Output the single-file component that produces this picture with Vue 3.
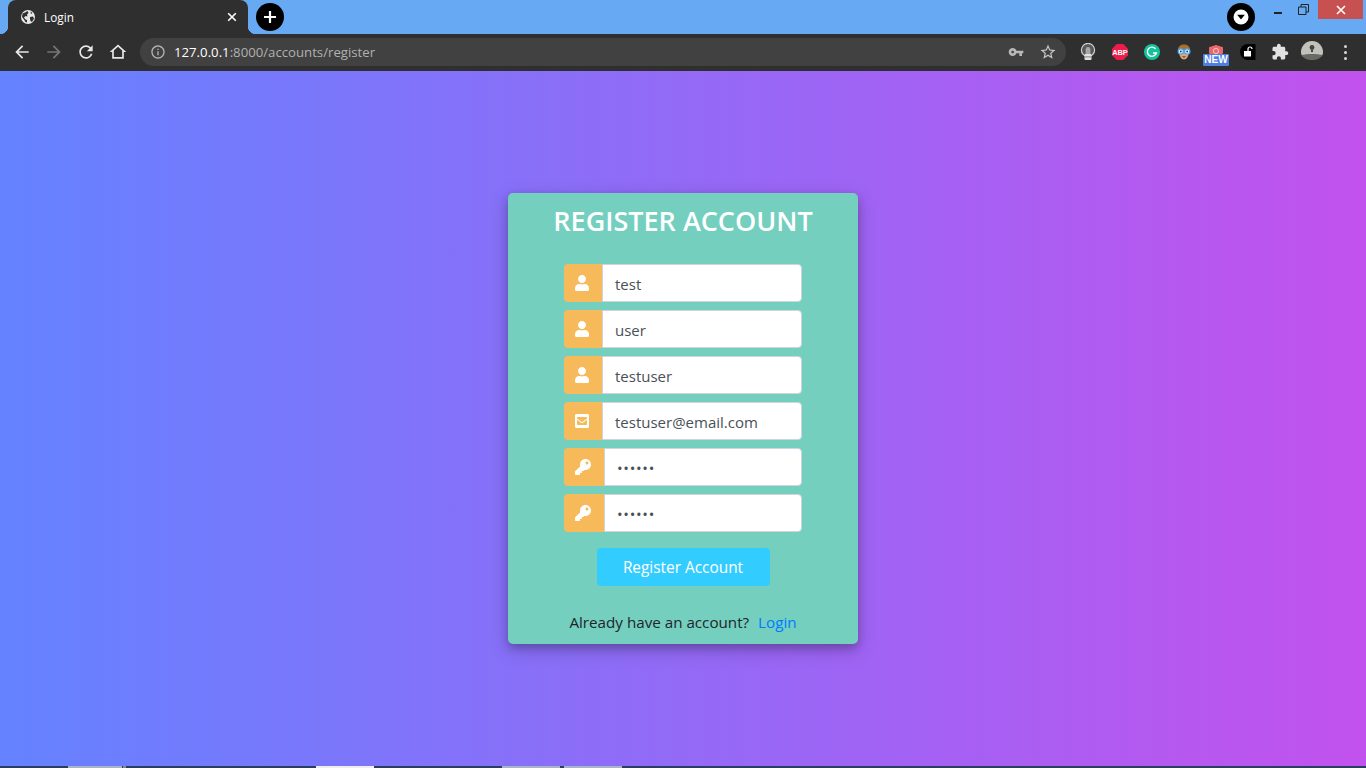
<script setup>
const fields = [
  { icon: 'user', value: 'test', type: 'text' },
  { icon: 'user', value: 'user', type: 'text' },
  { icon: 'user', value: 'testuser', type: 'text' },
  { icon: 'mail', value: 'testuser@email.com', type: 'text' },
  { icon: 'key', value: 'secret', type: 'password' },
  { icon: 'key', value: 'secret', type: 'password' },
]
</script>

<template>
  <div class="screen">
    <header class="tabstrip">
      <div class="tab">
        <svg class="favicon" viewBox="0 0 14 14" width="14" height="14">
          <circle cx="7" cy="7" r="7" fill="#e8e8e8" />
          <path d="M1.5 3.5 L4 2.5 L6.5 1 L7.5 3 L6 4.5 L6.5 6.5 L4.5 6 L3 7.5 L4.5 9.5 L6 10 L6 12.5 L4.5 12 L3 9.5 L1 7 Z" fill="#2f2f2f" />
          <path d="M9 7 L12 6.5 L13 8.5 L11 12 L9.5 11 L9 9 Z M9.5 1.5 L11.5 3 L10 4 Z" fill="#2f2f2f" />
        </svg>
        <span class="tab-title">Login</span>
        <svg class="tab-close" viewBox="0 0 10 10" width="10" height="10">
          <path d="M1.2 1.2 L8.8 8.8 M8.8 1.2 L1.2 8.8" stroke="#fff" stroke-width="1.6" />
        </svg>
      </div>
      <div class="newtab">
        <svg viewBox="0 0 14 14" width="14" height="14">
          <path d="M7 1 V13 M1 7 H13" stroke="#fff" stroke-width="2.2" />
        </svg>
      </div>
      <div class="strip-right">
        <div class="profile-dot">
          <svg viewBox="0 0 16 16" width="16" height="16">
            <circle cx="8" cy="8" r="7.5" fill="#fff" />
            <path d="M4.2 5.8 H11.8 L8 10.6 Z" fill="#000" />
          </svg>
        </div>
        <div class="winctl">
          <svg viewBox="0 0 10 10" width="10" height="10"><rect x="0" y="7" width="8" height="2" fill="#222" /></svg>
        </div>
        <div class="winctl">
          <svg viewBox="0 0 11 11" width="11" height="11">
            <path d="M.5 3 H8 V10.5 H.5 Z M3 3 V.5 H10.5 V8 H8" fill="none" stroke="#222" stroke-width="1" />
          </svg>
        </div>
        <div class="winclose">
          <svg viewBox="0 0 10 10" width="10" height="10">
            <path d="M1 1 L9 9 M9 1 L1 9" stroke="#fff" stroke-width="1.6" />
          </svg>
        </div>
      </div>
    </header>

    <nav class="toolbar">
      <div class="tool"><svg viewBox="0 0 24 24" width="20" height="20"><path fill="#e8e8e8" d="M20 11H7.83l5.59-5.59L12 4l-8 8 8 8 1.41-1.41L7.83 13H20v-2z" /></svg></div>
      <div class="tool"><svg viewBox="0 0 24 24" width="20" height="20"><path fill="#767676" d="M4 11h12.17l-5.59-5.59L12 4l8 8-8 8-1.41-1.41L16.17 13H4v-2z" /></svg></div>
      <div class="tool"><svg viewBox="0 0 24 24" width="20" height="20"><path fill="#e8e8e8" d="M17.65 6.35A7.958 7.958 0 0 0 12 4c-4.42 0-7.99 3.58-7.99 8s3.57 8 7.99 8c3.73 0 6.84-2.55 7.73-6h-2.08A5.99 5.99 0 0 1 12 18c-3.31 0-6-2.69-6-6s2.69-6 6-6c1.66 0 3.14.69 4.22 1.78L13 11h7V4l-2.35 2.35z" /></svg></div>
      <div class="tool"><svg viewBox="0 0 24 24" width="20" height="20"><path fill="#e8e8e8" d="M12 3L2 12h3v8h14v-8h3L12 3zm5 15H7v-7.81l5-4.5 5 4.5V18z" /></svg></div>

      <div class="omnibox">
        <svg class="info" viewBox="0 0 24 24" width="16" height="16"><path fill="#b4b4b4" d="M11 7h2v2h-2zm0 4h2v6h-2zm1-9C6.48 2 2 6.48 2 12s4.48 10 10 10 10-4.48 10-10S17.52 2 12 2zm0 18c-4.41 0-8-3.59-8-8s3.59-8 8-8 8 3.59 8 8-3.59 8-8 8z" /></svg>
        <span class="url"><span class="host">127.0.0.1</span>:8000/accounts/register</span>
        <div class="tool"><svg viewBox="0 0 24 24" width="16" height="16"><path fill="#b8b8b8" d="M12.65 10C11.83 7.67 9.61 6 7 6c-3.31 0-6 2.69-6 6s2.69 6 6 6c2.61 0 4.83-1.67 5.65-4H17v4h4v-4h2v-4H12.65zM7 14c-1.1 0-2-.9-2-2s.9-2 2-2 2 .9 2 2-.9 2-2 2z" /></svg></div>
        <div class="tool"><svg viewBox="0 0 24 24" width="18" height="18"><path fill="#c8c8c8" d="M22 9.24l-7.19-.62L12 2 9.19 8.63 2 9.24l5.46 4.73L5.82 21 12 17.27 18.18 21l-1.63-7.03L22 9.24zM12 15.4l-3.76 2.27 1-4.28-3.32-2.88 4.38-.38L12 6.1l1.71 4.04 4.38.38-3.32 2.88 1 4.28L12 15.4z" /></svg></div>
      </div>

      <div class="tool">
        <svg viewBox="0 0 16 18" width="16" height="18">
          <circle cx="8" cy="7" r="6.6" fill="#5a5a5a" stroke="#d0d0d0" stroke-width="1.2" />
          <path d="M5.6 6.5 a2.4 2.4 0 0 1 4.8 0 V11 H5.6 Z" fill="#a8a8a8" />
          <rect x="4.5" y="11" width="7" height="6" rx="1" fill="#e2e2e2" />
          <rect x="4.5" y="13.4" width="7" height="1" fill="#7c7c7c" />
        </svg>
      </div>
      <div class="tool">
        <svg viewBox="0 0 16 16" width="16" height="16">
          <path d="M4.7 0 H11.3 L16 4.7 V11.3 L11.3 16 H4.7 L0 11.3 V4.7 Z" fill="#ec1c4b" />
          <text x="8" y="11" class="abp">ABP</text>
        </svg>
      </div>
      <div class="tool">
        <svg viewBox="0 0 16 16" width="16" height="16">
          <circle cx="8" cy="8" r="8" fill="#15c39a" />
          <path d="M11.6 4.9 A4.6 4.6 0 1 0 12.4 9 H9" fill="none" stroke="#fff" stroke-width="1.4" />
        </svg>
      </div>
      <div class="tool">
        <svg viewBox="0 0 16 16" width="16" height="16">
          <path d="M2 7 C1.5 2 5 0.5 8 0.5 C11 0.5 14.5 2 14 7 Z" fill="#a8712f" />
          <path d="M3 7 H13 C13 12 10.5 15.5 8 15.5 C5.5 15.5 3 12 3 7 Z" fill="#e0a878" />
          <circle cx="4.8" cy="7.5" r="2.6" fill="#eef7ff" stroke="#4aa8f0" stroke-width="1.4" />
          <circle cx="11.2" cy="7.5" r="2.6" fill="#eef7ff" stroke="#4aa8f0" stroke-width="1.4" />
          <circle cx="4.8" cy="7.5" r=".9" fill="#234" />
          <circle cx="11.2" cy="7.5" r=".9" fill="#234" />
          <path d="M6 12.2 H10 L9 13.4 H7 Z" fill="#8a3b2a" />
        </svg>
      </div>
      <div class="tool ext-new">
        <svg class="shield" viewBox="0 0 16 12" width="16" height="12">
          <path d="M8 0 L15 2.2 V8 L12 12 H4 L1 8 V2.2 Z" fill="#e8696b" />
          <circle cx="8" cy="6" r="2.6" fill="none" stroke="#f8c8c8" stroke-width="1" />
        </svg>
        <span class="new-badge">NEW</span>
      </div>
      <div class="tool">
        <svg viewBox="0 0 16 16" width="16" height="16">
          <path d="M8 0 H15.5 V16 H8 A8 8 0 0 1 8 0 Z" fill="#000" />
          <path d="M8 7 V5 a2 2 0 0 1 4 0" fill="none" stroke="#fff" stroke-width="1.2" />
          <rect x="4" y="7" width="7" height="5.5" fill="#fff" />
        </svg>
      </div>
      <div class="tool"><svg viewBox="0 0 24 24" width="18" height="18"><path fill="#e2e2e2" d="M20.5 11H19V7c0-1.1-.9-2-2-2h-4V3.5C13 2.12 11.88 1 10.5 1S8 2.12 8 3.5V5H4c-1.1 0-1.99.9-1.99 2v3.8H3.5c1.49 0 2.7 1.21 2.7 2.7s-1.21 2.7-2.7 2.7H2V20c0 1.1.9 2 2 2h3.8v-1.5c0-1.49 1.21-2.7 2.7-2.7 1.49 0 2.7 1.21 2.7 2.7V22H17c1.1 0 2-.9 2-2v-4h1.5c1.38 0 2.5-1.12 2.5-2.5S21.88 11 20.5 11z" /></svg></div>
      <div class="tool">
        <svg class="avatar" viewBox="0 0 22 21" width="22" height="21">
          <path d="M0 12 A11 11 0 0 1 22 12 C22 16 20 18.5 11 19 C2 18.5 0 16 0 12 Z" fill="#c2c2ba" />
          <path d="M0.6 15 C5 13.5 17 13.5 21.4 15 C20 18 16 20 11 20 C6 20 2 18 0.6 15 Z" fill="#6a6a64" />
          <circle cx="11" cy="7.5" r="2.4" fill="#444" />
          <rect x="10" y="9.5" width="2" height="2.6" fill="#444" />
        </svg>
      </div>
      <div class="tool menu-dots">
        <i></i><i></i><i></i>
      </div>
    </nav>

    <main class="page">
      <section class="card">
        <h3 class="title">REGISTER ACCOUNT</h3>
        <form class="form" @submit.prevent>
          <div v-for="(f, i) in fields" :key="i" class="group">
            <span class="addon" :class="{ wide: f.icon === 'key' }">
              <svg v-if="f.icon === 'user'" viewBox="0 0 448 512" width="14" height="16"><path fill="#fff" d="M224 256c70.7 0 128-57.3 128-128S294.7 0 224 0 96 57.3 96 128s57.3 128 128 128zm89.6 32h-16.7c-22.2 10.2-46.9 16-72.9 16s-50.6-5.8-72.9-16h-16.7C60.2 288 0 348.2 0 422.4V464c0 26.5 21.5 48 48 48h352c26.5 0 48-21.5 48-48v-41.6c0-74.2-60.2-134.4-134.4-134.4z" /></svg>
              <svg v-else-if="f.icon === 'mail'" viewBox="0 0 448 512" width="14" height="16"><path fill="#fff" d="M400 32H48C21.49 32 0 53.49 0 80v352c0 26.51 21.49 48 48 48h352c26.51 0 48-21.49 48-48V80c0-26.51-21.49-48-48-48zM178.117 262.104C87.429 196.287 88.353 196.121 64 177.167V152c0-13.255 10.745-24 24-24h272c13.255 0 24 10.745 24 24v25.167c-24.371 18.969-23.434 19.124-114.117 84.938-10.5 7.655-31.392 26.12-45.883 25.894-14.503.218-35.367-18.227-45.883-25.895zM384 217.775V360c0 13.255-10.745 24-24 24H88c-13.255 0-24-10.745-24-24V217.775c13.958 10.794 33.329 25.236 95.303 70.214 14.162 10.341 37.975 32.145 64.694 32.01 26.887.134 51.037-22.041 64.72-32.025 61.958-44.965 81.325-59.406 95.283-70.199z" /></svg>
              <svg v-else viewBox="0 0 512 512" width="16" height="16"><path fill="#fff" d="M512 176.001C512 273.203 433.202 352 336 352c-11.22 0-22.19-1.062-32.827-3.069l-24.012 27.014A23.999 23.999 0 0 1 261.223 384H224v40c0 13.255-10.745 24-24 24h-40v40c0 13.255-10.745 24-24 24H24c-13.255 0-24-10.745-24-24v-78.059c0-6.365 2.529-12.47 7.029-16.971l161.802-161.802C163.108 213.814 160 195.271 160 176 160 78.798 238.797.001 335.999 0 433.488-.001 512 78.511 512 176.001zM336 128c0 26.51 21.49 48 48 48s48-21.49 48-48-21.49-48-48-48-48 21.49-48 48z" /></svg>
            </span>
            <input class="field" :class="{ secret: f.type === 'password' }" :type="f.type" :value="f.value" />
          </div>
          <button class="submit" type="submit">Register Account</button>
        </form>
        <p class="footer">Already have an account? <a href="#" class="link" @click.prevent>Login</a></p>
      </section>
    </main>

    <footer class="taskbar">
      <i class="seg seg-a"></i><i class="seg seg-b"></i>
      <i class="seg seg-c"></i>
      <i class="seg seg-d"></i><i class="seg seg-e"></i>
    </footer>
  </div>
</template>

<style>
html, body { margin: 0; padding: 0; overflow: hidden; }
</style>

<style scoped>
.screen {
  width: 1366px;
  height: 768px;
  display: flex;
  flex-direction: column;
  overflow: hidden;
  font-family: "Open Sans", "Noto Sans", sans-serif;
}

/* tab strip */
.tabstrip {
  height: 34px;
  flex: none;
  display: flex;
  align-items: stretch;
  background: #67aaf3;
}
.tab {
  position: relative;
  width: 240px;
  margin-left: 8px;
  background: #2f2f2f;
  border-radius: 8px 8px 0 0;
  display: flex;
  align-items: center;
  box-sizing: border-box;
  padding-left: 13px;
  color: #fff;
}
.tab::before,
.tab::after {
  content: "";
  position: absolute;
  bottom: 0;
  width: 8px;
  height: 8px;
}
.tab::before {
  left: -8px;
  background: radial-gradient(circle at 0 0, transparent 8px, #2f2f2f 8.5px);
}
.tab::after {
  right: -8px;
  background: radial-gradient(circle at 100% 0, transparent 8px, #2f2f2f 8.5px);
}
.favicon { flex: none; }
.tab-title {
  margin-left: 9px;
  margin-top: -1px;
  font-size: 11.8px;
  flex: 1;
}
.tab-close { margin-right: 11px; }
.newtab {
  width: 28px;
  height: 28px;
  margin: 3px 0 0 8px;
  border-radius: 50%;
  background: #000;
  display: flex;
  align-items: center;
  justify-content: center;
}
.strip-right {
  margin-left: auto;
  display: flex;
  align-items: flex-start;
}
.profile-dot {
  width: 28px;
  height: 28px;
  margin: 3px 11px 0 0;
  border-radius: 50%;
  background: #000;
  display: flex;
  align-items: center;
  justify-content: center;
}
.winctl {
  width: 25px;
  height: 19px;
  display: flex;
  align-items: center;
  justify-content: center;
}
.winclose {
  width: 45px;
  height: 19px;
  margin: 0 3px 0 2px;
  background: #c75050;
  display: flex;
  align-items: center;
  justify-content: center;
}

/* toolbar */
.toolbar {
  height: 37px;
  flex: none;
  box-sizing: border-box;
  background: #2f2f2f;
  display: flex;
  align-items: center;
  padding: 0 4px 1px 6px;
}
.tool {
  width: 32px;
  height: 28px;
  flex: none;
  display: flex;
  align-items: center;
  justify-content: center;
  position: relative;
}
.omnibox {
  flex: 1;
  height: 28px;
  margin: 0 6px;
  padding: 0 2px 0 10px;
  background: #414141;
  border-radius: 14px;
  display: flex;
  align-items: center;
  font-size: 13.2px;
  color: #b0b0b0;
}
.info { flex: none; }
.url { flex: 1; margin-left: 8px; }
.host { color: #fff; }
.abp {
  font-family: "Liberation Sans", sans-serif;
  font-size: 7.4px;
  font-weight: 700;
  fill: #fff;
  text-anchor: middle;
}
.ext-new .shield { align-self: flex-start; margin-top: 7px; }
.new-badge {
  position: absolute;
  left: 3px;
  top: 16px;
  width: 26px;
  height: 12px;
  background: #4c7fe0;
  border-radius: 1px;
  color: #fff;
  font-family: "Liberation Sans", sans-serif;
  font-size: 10px;
  font-weight: 700;
  line-height: 12px;
  text-align: center;
}
.avatar { margin-top: -3px; }
.menu-dots {
  width: 34px;
  flex-direction: column;
  gap: 3px;
}
.menu-dots i {
  width: 3px;
  height: 3px;
  border-radius: 50%;
  background: #d8d8d8;
}

/* page */
.page {
  flex: 1;
  min-height: 0;
  display: flex;
  align-items: center;
  justify-content: center;
  background: linear-gradient(to right, #6482ff, #c252ee);
}
.card {
  width: 350px;
  height: 451px;
  box-sizing: border-box;
  background: #74cfbf;
  border-radius: 5px;
  box-shadow: 0 4px 8px 0 rgba(0, 0, 0, 0.2), 0 6px 20px 0 rgba(0, 0, 0, 0.19);
}
.title {
  margin: 0 0 15px;
  height: 56px;
  line-height: 55px;
  text-align: center;
  color: #fff;
  font-size: 27px;
  font-weight: 600;
}
.form {
  width: 238px;
  margin: 0 auto;
  display: flex;
  flex-direction: column;
  gap: 8px;
}
.group {
  display: flex;
  height: 38px;
}
.addon {
  width: 38px;
  flex: none;
  box-sizing: border-box;
  padding-right: 2px;
  display: flex;
  align-items: center;
  justify-content: center;
  background: #f7ba5b;
  border-radius: 4px 0 0 4px;
}
.addon.wide { width: 40px; }
.field {
  flex: 1;
  min-width: 0;
  box-sizing: border-box;
  height: 38px;
  padding: 8px 12px 6px;
  border: 1px solid #ced4da;
  border-radius: 0 4px 4px 0;
  background: #fff;
  color: #495057;
  font-family: inherit;
  font-size: 15px;
  outline: none;
}
.field.secret { letter-spacing: 0.7px; }
.submit {
  align-self: center;
  width: 173px;
  height: 38px;
  margin-top: 8px;
  border: 0;
  border-radius: 4px;
  background: #33ccff;
  color: #fff;
  font-family: inherit;
  font-size: 15.4px;
}
.footer {
  margin: 24px 0 0;
  height: 24px;
  line-height: 24px;
  text-align: center;
  font-size: 15.2px;
  color: #212529;
}
.link {
  margin-left: 5px;
  color: #007bff;
  text-decoration: none;
}

/* bottom strip */
.taskbar {
  height: 2px;
  flex: none;
  display: flex;
  background: #2c3e5e;
}
.seg { height: 2px; display: block; }
.seg-a { width: 54px; margin-left: 68px; background: #a9b4c6; }
.seg-b { width: 3px; margin-left: 1px; background: #7f8ba3; }
.seg-c { width: 58px; margin-left: 190px; background: #eeeeee; }
.seg-d { width: 58px; margin-left: 128px; background: #a9b4c6; }
.seg-e { width: 58px; margin-left: 4px; background: #a9b4c6; }
</style>
